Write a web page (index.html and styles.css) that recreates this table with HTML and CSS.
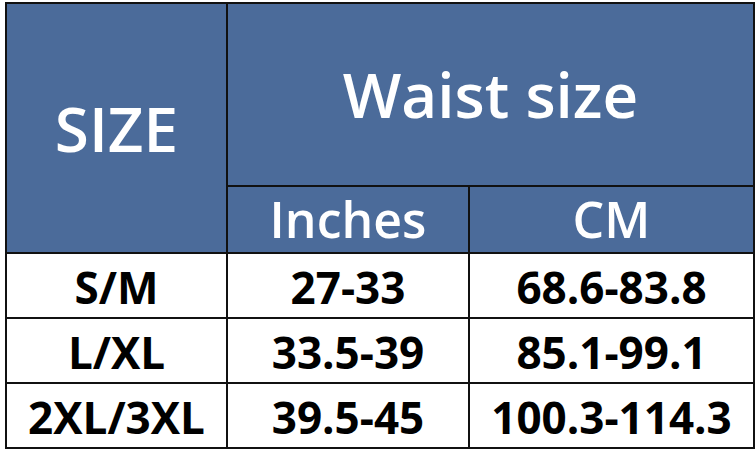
FILE: index.html
```html
<!DOCTYPE html>
<html>
<head>
<meta charset="utf-8">
<link rel="stylesheet" href="styles.css">
</head>
<body>
<table class="size-table">
  <colgroup>
    <col class="c1"><col class="c2"><col class="c3">
  </colgroup>
  <tr class="head1">
    <th class="h-size" rowspan="2">SIZE</th>
    <th class="h-waist" colspan="2">Waist size</th>
  </tr>
  <tr class="head2">
    <th class="h-sub">Inches</th>
    <th class="h-sub">CM</th>
  </tr>
  <tr class="row"><td>S/M</td><td>27-33</td><td>68.6-83.8</td></tr>
  <tr class="row"><td>L/XL</td><td>33.5-39</td><td>85.1-99.1</td></tr>
  <tr class="row"><td>2XL/3XL</td><td>39.5-45</td><td>100.3-114.3</td></tr>
</table>
</body>
</html>
```
FILE: styles.css
```css
html, body {
  margin: 0;
  padding: 0;
  background: #ffffff;
}
body {
  padding: 2px 0 0 5px;
  font-family: "Open Sans", "Noto Sans", sans-serif;
}
.size-table {
  border-collapse: collapse;
  table-layout: fixed;
  width: 748px;
}
.c1 { width: 221px; }
.c2 { width: 242px; }
.c3 { width: 285px; }
.size-table th,
.size-table td {
  border: 2px solid #111111;
  padding: 0;
  text-align: center;
  vertical-align: middle;
  line-height: 1.1;
}
.size-table th {
  background: #4b6b9a;
  color: #ffffff;
  font-weight: 600;
}
.head1 { height: 183px; }
.head2 { height: 67px; }
.row { height: 65px; }
.h-size, .h-waist {
  font-size: 62px;
}
.h-sub {
  font-size: 50px;
  padding-top: 2px;
}
.size-table td {
  font-size: 44px;
  font-weight: 700;
  color: #000000;
  padding-top: 4px;
}
```
